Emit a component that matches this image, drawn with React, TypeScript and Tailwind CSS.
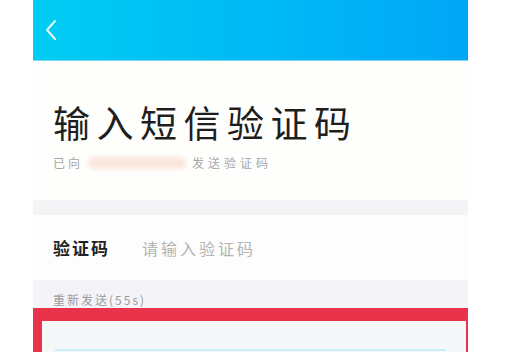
import React from 'react';

const cjk = { fontFamily: '"Noto Sans CJK SC", "Noto Sans", sans-serif' };

const App: React.FC = () => {
  return (
    <div className="w-[515px] h-[352px] bg-white overflow-hidden" style={cjk}>
      <div className="ml-[33px] w-[435px] h-[352px] flex flex-col bg-[#f4f4f7]">
        {/* Header */}
        <div className="h-[61px] shrink-0 bg-gradient-to-r from-[#00cdf3] to-[#00a7f7] flex items-center pl-[11px] border-b border-[#7fd8f0]">
          <svg width="14" height="22" viewBox="0 0 14 22" fill="none">
            <path d="M11 2 L3 11 L11 20" stroke="#e8fbff" strokeWidth="2" strokeLinecap="round" strokeLinejoin="round" />
          </svg>
        </div>

        {/* Title block */}
        <div className="h-[139px] shrink-0 bg-[#fefefd] pl-[20px] pt-[38px]">
          <div className="text-[37px] leading-[46px] tracking-[6.5px] text-[#1e1e1e] font-normal">输入短信验证码</div>
          <div className="mt-[10px] flex items-center text-[12px] leading-[16px] text-[#a8a8a8] tracking-[3px]">
            <span>已向</span>
            <span className="ml-[5px] w-[98px] h-[12px] rounded-full bg-[#fbe6dc] blur-[2px]" />
            <span className="ml-[6px] tracking-[4px]">发送验证码</span>
          </div>
        </div>

        <div className="h-[15px] shrink-0 bg-[#f4f4f6]" />

        {/* Input row */}
        <div className="h-[65px] shrink-0 bg-[#fdfdfd] flex items-center pl-[20px]">
          <span className="text-[17px] font-bold text-[#222] tracking-[2px]">验证码</span>
          <span className="ml-[32px] text-[16px] text-[#b4b4b4] tracking-[3px]">请输入验证码</span>
        </div>

        {/* Resend */}
        <div className="h-[28px] shrink-0 bg-[#f4f4f8] pl-[20px] pt-[12px] overflow-hidden">
          <div className="text-[12px] leading-[16px] text-[#9a9a9a] tracking-[2px]">重新发送(55s)</div>
        </div>

        {/* Red highlight box */}
        <div className="flex-1 border-t-[13px] border-l-[9px] border-r-[2px] border-[#e8334a] bg-[#f5f8f8] flex flex-col justify-end">
          <div className="ml-[13px] mr-[20px] mb-[1px] h-[2px] bg-[#c8f0fa]" />
        </div>
      </div>
    </div>
  );
};

export default App;
